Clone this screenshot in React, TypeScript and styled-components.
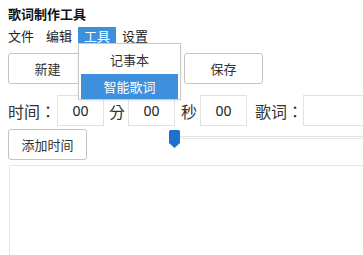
import styled, { createGlobalStyle } from 'styled-components'

const GlobalStyle = createGlobalStyle`
  body {
    margin: 0;
    background: #fff;
    overflow: hidden;
    font-family: "Noto Sans CJK SC", "Noto Sans", sans-serif;
    color: #333;
  }
`

const Page = styled.div`
  width: 363px;
  height: 255px;
  padding: 0 8px;
  box-sizing: border-box;
  overflow: hidden;
`

const Title = styled.div`
  margin-top: 4px;
  height: 20px;
  line-height: 20px;
  font-size: 13px;
  font-weight: bold;
  color: #111;
  white-space: nowrap;
`

const MenuBar = styled.div`
  display: flex;
  margin: 3px 0 0 -6px;
  height: 17px;
`

const MenuItem = styled.div<{ active?: boolean }>`
  position: relative;
  padding: 0 6px;
  height: 17px;
  line-height: 17px;
  font-size: 13px;
  color: ${(p) => (p.active ? '#fff' : '#222')};
  background: ${(p) => (p.active ? '#3f90dc' : 'transparent')};
`

const DropMenu = styled.div`
  position: absolute;
  left: 0;
  top: 16px;
  width: 103px;
  height: 57px;
  box-sizing: border-box;
  padding: 3px 2px;
  background: #fff;
  border: 1px solid #c9c9c9;
  box-shadow: 0 1px 3px rgba(0, 0, 0, 0.08);
  z-index: 5;
`

const DropItem = styled.div<{ active?: boolean }>`
  height: 25px;
  line-height: 25px;
  text-align: center;
  font-size: 13px;
  color: ${(p) => (p.active ? '#fff' : '#333')};
  background: ${(p) => (p.active ? '#3f90dc' : 'transparent')};
  margin-top: ${(p) => (p.active ? '2px' : '0')};
`

const ButtonRow = styled.div`
  display: flex;
  gap: 9px;
  margin-top: 9px;
`

const Button = styled.button`
  flex: none;
  width: 79px;
  height: 31px;
  padding: 0;
  border: 1px solid #c4c4c4;
  border-radius: 3px;
  background: #fff;
  font-family: inherit;
  font-size: 13px;
  color: #333;
  white-space: nowrap;
`

const TimeRow = styled.div`
  display: flex;
  align-items: center;
  margin-top: 11px;
  white-space: nowrap;
`

const Label = styled.span<{ gapLeft?: number; gapRight?: number }>`
  flex: none;
  font-family: "Noto Sans CJK TC", "Noto Sans CJK SC", sans-serif;
  font-size: 16px;
  color: #333;
  margin-left: ${(p) => p.gapLeft ?? 0}px;
  margin-right: ${(p) => p.gapRight ?? 0}px;
`

const NumInput = styled.input`
  flex: none;
  width: 47px;
  height: 31px;
  box-sizing: border-box;
  border: 1px solid #e2e2e2;
  text-align: center;
  font-family: "Noto Sans", sans-serif;
  font-size: 14px;
  color: #222;
  outline: none;
`

const LyricInput = styled.input`
  flex: none;
  width: 120px;
  height: 31px;
  box-sizing: border-box;
  border: 1px solid #e2e2e2;
  outline: none;
`

const ToolRow = styled.div`
  display: flex;
  align-items: flex-start;
  margin-top: 3px;
`

const Slider = styled.div`
  position: relative;
  flex: none;
  margin-left: 82px;
  width: 260px;
  height: 20px;
`

const Track = styled.div`
  position: absolute;
  left: 10px;
  right: 0;
  top: 7px;
  height: 1px;
  border-top: 1px solid #e3e3e3;
  border-bottom: 1px solid #e3e3e3;
`

const Thumb = styled.svg`
  position: absolute;
  left: 0;
  top: 1px;
`

const TextArea = styled.textarea`
  display: block;
  margin-top: 5px;
  margin-left: 1px;
  width: 420px;
  height: 120px;
  box-sizing: border-box;
  border: 1px solid #e4e4e4;
  resize: none;
  outline: none;
`

export default function App() {
  return (
    <Page>
      <GlobalStyle />
      <Title>歌词制作工具</Title>
      <MenuBar>
        <MenuItem>文件</MenuItem>
        <MenuItem>编辑</MenuItem>
        <MenuItem active>
          工具
          <DropMenu>
            <DropItem>记事本</DropItem>
            <DropItem active>智能歌词</DropItem>
          </DropMenu>
        </MenuItem>
        <MenuItem>设置</MenuItem>
      </MenuBar>
      <ButtonRow>
        <Button>新建</Button>
        {/* hidden under the open menu */}
        <Button aria-label="打开" />
        <Button>保存</Button>
      </ButtonRow>
      <TimeRow>
        <Label gapRight={1}>时间：</Label>
        <NumInput defaultValue="00" />
        <Label gapLeft={5} gapRight={3}>分</Label>
        <NumInput defaultValue="00" />
        <Label gapLeft={6} gapRight={3}>秒</Label>
        <NumInput defaultValue="00" />
        <Label gapLeft={8} gapRight={0}>歌词：</Label>
        <LyricInput />
      </TimeRow>
      <ToolRow>
        <Button>添加时间</Button>
        <Slider>
          <Track />
          <Thumb width="11" height="18" viewBox="0 0 11 18">
            <path d="M1.5 0h8A1.5 1.5 0 0 1 11 1.5V13l-5.5 5L0 13V1.5A1.5 1.5 0 0 1 1.5 0z" fill="#1f6fd0" />
          </Thumb>
        </Slider>
      </ToolRow>
      <TextArea />
    </Page>
  )
}
